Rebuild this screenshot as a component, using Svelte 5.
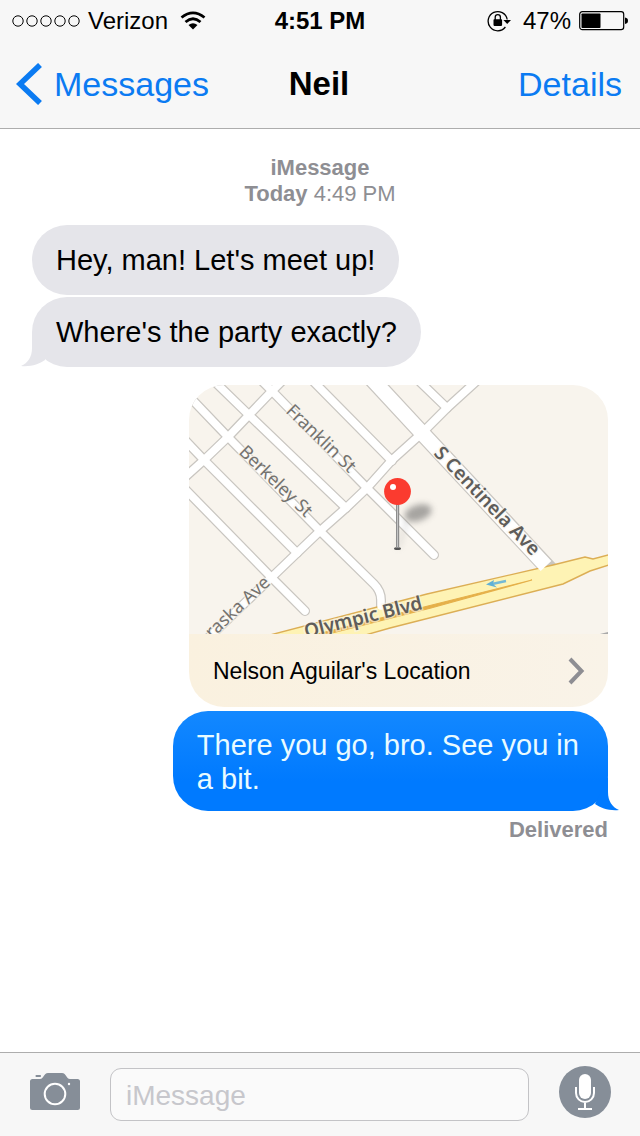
<script>
  const contact = 'Neil';
  const received = ["Hey, man! Let's meet up!", "Where's the party exactly?"];
  const reply = 'There you go, bro. See you in a bit.';
  let draft = $state('');

  const streets = [
    'M262 381 L272 391 L367 488 L434 555',
    'M213 380 L249 415 L346 508',
    'M184 391 L228 437 L320 531 L374 584 Q381 591 381 600 L381 606',
    'M184 439 L204 460 L297 553',
    'M184 488 L271 577 L305 611',
    'M310 378 L392 461',
    'M417 379 L447 408',
    'M284 379 L272 391 L249 415 L228 437 L204 460 L184 478',
    'M480 378 L447 408 L422 433 L392 460 L367 488 L346 508 L320 531 L297 553 L272 577 L203 643'
  ];
  const avenue = 'M371 378 L422 433 L550 570';
  const boulevard =
    'M270 635 L427 594 L553 565 L585 557 L593 559 L612 554 L612 564 L590 571 L563 584 L390 628 L362 636 Z';
</script>

<main class="phone">
  <header>
    <div class="status">
      <div class="side">
        <svg width="70" height="20" viewBox="0 0 70 20" aria-hidden="true">
          {#each [6, 20, 34, 48, 62] as cx}
            <circle {cx} cy="10" r="5.2" fill="none" stroke="#000" />
          {/each}
        </svg>
        <span class="carrier">Verizon</span>
        <svg class="wifi" width="26" height="20" viewBox="0 0 26 20" aria-hidden="true">
          <g fill="none" stroke="#000" stroke-width="2.8">
            <path d="M1.5 6.5 Q13 -2.8 24.5 6.5" />
            <path d="M5.5 11 Q13 4.5 20.5 11" />
          </g>
          <path d="M8.5 14 Q13 10.5 17.5 14 L13 18.6 Z" />
        </svg>
      </div>
      <strong>4:51 PM</strong>
      <div class="side end">
        <svg width="24" height="24" viewBox="0 0 24 24" aria-hidden="true">
          <path d="M20.2 10.5 A9.6 9.6 0 1 0 18.4 18" fill="none" stroke="#000" stroke-width="1.3" />
          <path d="M16.4 11 H24 L20.2 15 Z" />
          <rect x="6.5" y="10.3" width="8.6" height="6.6" rx="0.8" />
          <path d="M8.2 11 V8.2 a2.6 2.6 0 0 1 5.2 0 V11" fill="none" stroke="#000" stroke-width="1.3" />
        </svg>
        <span class="percent">47%</span>
        <svg width="49" height="20" viewBox="0 0 49 20" aria-hidden="true">
          <rect x="0.7" y="0.7" width="44" height="18" rx="2.6" fill="none" stroke="#000" stroke-width="1.2" />
          <rect x="2.5" y="2.5" width="19" height="14.5" rx="0.8" />
          <path d="M46 6.5 Q49 7 49 9.8 Q49 12.6 46 13 Z" />
        </svg>
      </div>
    </div>
    <nav>
      <a class="back" href="#messages">
        <svg width="26" height="42" viewBox="0 0 26 42" aria-hidden="true">
          <path d="M24 2 L4 21 L24 40" fill="none" stroke="currentColor" stroke-width="5.6" />
        </svg>
        Messages
      </a>
      <h1>{contact}</h1>
      <a class="details" href="#details">Details</a>
    </nav>
  </header>

  <section class="thread">
    <p class="stamp"><strong>iMessage</strong><br /><strong>Today</strong> 4:49 PM</p>

    {#each received as text, i}
      <p class="bubble in">
        {text}
        {#if i === received.length - 1}
          <svg class="tail" width="24" height="35" viewBox="0 0 24 35" aria-hidden="true">
            <path d="M11 0 V16 C11 25 7 31 0 34 C10 35 18 32 24 28 L24 0 Z" />
          </svg>
        {/if}
      </p>
    {/each}

    <a class="place" href="#location">
      <svg class="map" viewBox="189 385 419 249" preserveAspectRatio="xMidYMid slice" role="img" aria-label="Map">
        <defs>
          <filter id="soft" x="-50%" y="-50%" width="200%" height="200%">
            <feGaussianBlur stdDeviation="3" />
          </filter>
        </defs>
        <rect x="189" y="385" width="419" height="249" fill="#f8f4ed" />
        <g fill="none" stroke="#c9c6c1" stroke-linecap="round" stroke-linejoin="round">
          {#each streets as d}<path {d} stroke-width="10" />{/each}
          <path d={avenue} stroke-width="17" />
        </g>
        <path d={boulevard} fill="#fef3b4" stroke="#dcae55" stroke-width="1.4" />
        <g fill="none" stroke="#fff" stroke-linecap="round" stroke-linejoin="round">
          {#each streets as d}<path {d} stroke-width="7.5" />{/each}
          <path d="M371 378 L422 433 L546 566" stroke-width="14.5" stroke-linecap="butt" />
        </g>
        <path d="M310 636 L428 606 L532 580 L431 608 L316 637 Z" fill="#e5b04a" stroke="#e5b04a" stroke-width="1.2" />
        <path d="M506 581 L492 584" fill="none" stroke="#74b9d6" stroke-width="2.4" />
        <path d="M486 584.5 L494 580 L493 584 L497 587.5 Z" fill="#5fb0d6" />
        <path d="M600 634 L608 632 V634 Z" fill="#aaa" />

        <g class="names">
          <text transform="translate(285 412) rotate(44)">Franklin St</text>
          <text transform="translate(238 453) rotate(44)">Berkeley St</text>
          <text transform="translate(212 639) rotate(-43)">raska Ave</text>
          <text class="major" transform="translate(433 454) rotate(46)">S Centinela Ave</text>
          <text class="major" transform="translate(306 638) rotate(-14)">Olympic Blvd</text>
        </g>

        <g filter="url(#soft)" opacity="0.5">
          <ellipse cx="418" cy="513" rx="14" ry="8" fill="#555" transform="rotate(-18 418 513)" />
          <path d="M398 548 L408 519" stroke="#999" stroke-width="2" />
        </g>
        <ellipse cx="397.5" cy="548.5" rx="3.5" ry="1.6" fill="#555" />
        <rect x="396" y="503" width="3.2" height="45" fill="#8d8d8d" />
        <rect x="397" y="503" width="1" height="44" fill="#c4c4c4" />
        <circle cx="397.5" cy="491.5" r="13.4" fill="#fb3b2f" />
        <circle cx="393" cy="487" r="3" fill="#fff" />
      </svg>
      <span class="caption">
        Nelson Aguilar's Location
        <svg width="18" height="28" viewBox="0 0 18 28" aria-hidden="true">
          <path d="M3 2 L14.5 14 L3 26" fill="none" stroke="#8e8e93" stroke-width="4" />
        </svg>
      </span>
    </a>

    <p class="bubble out">
      {reply}
      <svg class="tail" width="24" height="35" viewBox="0 0 24 35" aria-hidden="true">
        <path d="M13 0 V16 C13 25 17 31 24 34 C14 35 6 32 0 28 L8 12 Z" />
      </svg>
    </p>
    <p class="receipt">Delivered</p>
  </section>

  <form class="composer" onsubmit={(e) => e.preventDefault()}>
    <button type="button" aria-label="Camera">
      <svg width="50" height="57" viewBox="0 0 50 57">
        <rect x="5.5" y="9" width="5.5" height="2" rx="0.8" fill="#868e98" />
        <path d="M2.5 13 H10 C14 13 13.500 7 18 7 H32 C36.5 7 36 13 40 13 H47.5 Q50 13 50 15.5 V41.5 Q50 44 47.5 44 H2.5 Q0 44 0 41.5 V15.5 Q0 13 2.5 13 Z" fill="#868e98" />
        <circle cx="25" cy="28" r="10.3" fill="none" stroke="#fff" stroke-width="2" />
        <circle cx="39" cy="18" r="1.2" fill="#fff" />
      </svg>
    </button>
    <input type="text" placeholder="iMessage" aria-label="iMessage" bind:value={draft} />
    <button type="button" aria-label="Dictate">
      <svg width="52" height="57" viewBox="0 0 52 57">
        <circle cx="26" cy="26" r="26" fill="#868e98" />
        <rect x="20" y="8" width="12" height="25" rx="6" fill="#fff" />
        <path d="M17 21 V27 A9 9 0 0 0 35 27 V21 M26 36 V43 M19 43 H33" fill="none" stroke="#fff" stroke-width="2" />
      </svg>
    </button>
  </form>
</main>

<style>
  :global(body) {
    background: #fff;
  }
  .phone {
    display: flex;
    flex-direction: column;
    min-height: 100vh;
    font-family: 'Liberation Sans', Arial, sans-serif;
    color: #000;
  }
  svg {
    display: block;
    flex: none;
  }
  p,
  h1 {
    margin: 0;
  }
  a {
    color: #0b7bf2;
    text-decoration: none;
  }
  header {
    background: #f7f7f7;
    border-bottom: 1px solid #adadad;
  }
  .status,
  nav {
    display: grid;
    grid-template-columns: 1fr auto 1fr;
    align-items: center;
  }
  .status {
    height: 42px;
    padding: 0 12px;
    font-size: 24px;
  }
  .side {
    display: flex;
    align-items: center;
  }
  .end {
    justify-content: flex-end;
  }
  .carrier {
    margin: 0 12px 0 6px;
  }
  .percent {
    margin: 0 8px 0 12px;
  }
  nav {
    height: 84px;
    padding: 0 18px 2px 16px;
    font-size: 34px;
  }
  h1 {
    font-size: 33px;
  }
  .back {
    display: flex;
    align-items: center;
    gap: 12px;
  }
  .details {
    justify-self: end;
  }
  .thread {
    flex: 1;
    display: flex;
    flex-direction: column;
    align-items: flex-start;
    gap: 2px;
    padding: 26px 32px;
  }
  .stamp {
    align-self: center;
    margin-bottom: 16px;
    font-size: 22px;
    line-height: 26px;
    text-align: center;
    color: #8e8e93;
  }
  .bubble {
    position: relative;
    max-width: 68vw;
    box-sizing: border-box;
    padding: 18px 24px;
    border-radius: 35px;
    font-size: 29px;
    line-height: 34px;
  }
  .in {
    background: #e5e5ea;
  }
  .out {
    align-self: flex-end;
    margin-top: 2px;
    padding: 17px 24px 15px;
    background: linear-gradient(#1388ff, #007aff 70%);
    color: #e9fbff;
  }
  .tail {
    position: absolute;
    bottom: 0;
  }
  .in .tail {
    left: -11px;
    fill: #e5e5ea;
  }
  .out .tail {
    right: -11px;
    fill: #007aff;
  }
  .place {
    align-self: flex-end;
    width: 419px;
    max-width: 100%;
    margin-top: 16px;
    border-radius: 35px;
    overflow: hidden;
    color: #000;
  }
  .map {
    width: 100%;
    height: 249px;
  }
  .names {
    font-family: 'Noto Sans', sans-serif;
    font-size: 18px;
    fill: #75736f;
    stroke: #f8f4ed;
    stroke-width: 3px;
    stroke-opacity: 0.6;
    paint-order: stroke;
  }
  .major {
    font-size: 19px;
    font-weight: 600;
    fill: #5f5d5a;
  }
  .caption {
    display: flex;
    align-items: center;
    justify-content: space-between;
    height: 72px;
    padding: 1px 23px 0 24px;
    background: linear-gradient(90deg, #faf1df, #f9f3e8);
    font-size: 23px;
  }
  .receipt {
    align-self: flex-end;
    margin-top: 4px;
    font-size: 22px;
    line-height: 26px;
    font-weight: bold;
    color: #8e8e93;
  }
  .composer {
    display: flex;
    align-items: center;
    gap: 30px;
    padding: 13px 29px 13px 30px;
    background: #f7f7f7;
    border-top: 1px solid #adadad;
  }
  button {
    padding: 0;
    border: 0;
    background: none;
  }
  input {
    flex: 1;
    min-width: 0;
    height: 53px;
    box-sizing: border-box;
    padding: 2px 15px 0;
    border: 1px solid #c3c3c6;
    border-radius: 11px;
    background: #fafafa;
    font-family: inherit;
    font-size: 28px;
    color: #000;
  }
  input::placeholder {
    color: #c7c7cc;
    opacity: 1;
  }
</style>
